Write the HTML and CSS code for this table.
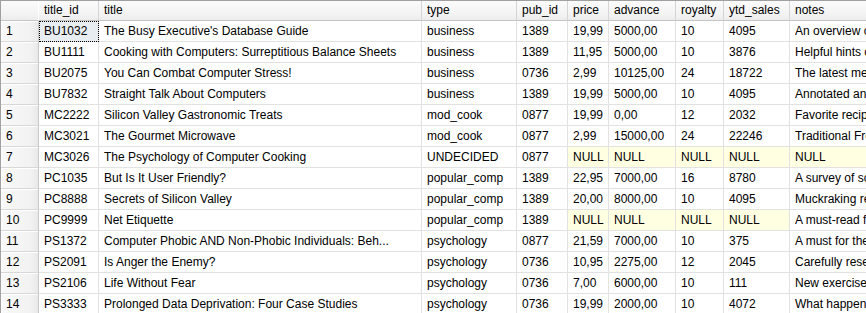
FILE: index.html
```html
<!DOCTYPE html>
<html>
<head>
  <link rel="stylesheet" href="styles.css">
</head>
<body>
  <div class="results">
    <div class="grid">
      <div class="hd corner"></div>
      <div class="hd">title_id</div>
      <div class="hd">title</div>
      <div class="hd">type</div>
      <div class="hd">pub_id</div>
      <div class="hd">price</div>
      <div class="hd">advance</div>
      <div class="hd">royalty</div>
      <div class="hd">ytd_sales</div>
      <div class="hd">notes</div>

      <div class="rn">1</div>
      <div class="cell selected">BU1032</div>
      <div class="cell">The Busy Executive's Database Guide</div>
      <div class="cell">business</div>
      <div class="cell">1389</div>
      <div class="cell">19,99</div>
      <div class="cell">5000,00</div>
      <div class="cell">10</div>
      <div class="cell">4095</div>
      <div class="cell">An overview of available database systems with emphasis on common business applications. Illustrated.</div>

      <div class="rn">2</div>
      <div class="cell">BU1111</div>
      <div class="cell">Cooking with Computers: Surreptitious Balance Sheets</div>
      <div class="cell">business</div>
      <div class="cell">1389</div>
      <div class="cell">11,95</div>
      <div class="cell">5000,00</div>
      <div class="cell">10</div>
      <div class="cell">3876</div>
      <div class="cell">Helpful hints on how to use your electronic resources to the best advantage.</div>

      <div class="rn">3</div>
      <div class="cell">BU2075</div>
      <div class="cell">You Can Combat Computer Stress!</div>
      <div class="cell">business</div>
      <div class="cell">0736</div>
      <div class="cell">2,99</div>
      <div class="cell">10125,00</div>
      <div class="cell">24</div>
      <div class="cell">18722</div>
      <div class="cell">The latest medical and psychological techniques for living with the electronic office.</div>

      <div class="rn">4</div>
      <div class="cell">BU7832</div>
      <div class="cell">Straight Talk About Computers</div>
      <div class="cell">business</div>
      <div class="cell">1389</div>
      <div class="cell">19,99</div>
      <div class="cell">5000,00</div>
      <div class="cell">10</div>
      <div class="cell">4095</div>
      <div class="cell">Annotated analysis of what computers can do for you: a no-hype guide for the critical user.</div>

      <div class="rn">5</div>
      <div class="cell">MC2222</div>
      <div class="cell">Silicon Valley Gastronomic Treats</div>
      <div class="cell">mod_cook</div>
      <div class="cell">0877</div>
      <div class="cell">19,99</div>
      <div class="cell">0,00</div>
      <div class="cell">12</div>
      <div class="cell">2032</div>
      <div class="cell">Favorite recipes for quick, easy, and elegant meals.</div>

      <div class="rn">6</div>
      <div class="cell">MC3021</div>
      <div class="cell">The Gourmet Microwave</div>
      <div class="cell">mod_cook</div>
      <div class="cell">0877</div>
      <div class="cell">2,99</div>
      <div class="cell">15000,00</div>
      <div class="cell">24</div>
      <div class="cell">22246</div>
      <div class="cell">Traditional French gourmet recipes adapted for modern microwave cooking.</div>

      <div class="rn">7</div>
      <div class="cell">MC3026</div>
      <div class="cell">The Psychology of Computer Cooking</div>
      <div class="cell">UNDECIDED</div>
      <div class="cell">0877</div>
      <div class="cell null">NULL</div>
      <div class="cell null">NULL</div>
      <div class="cell null">NULL</div>
      <div class="cell null">NULL</div>
      <div class="cell null">NULL</div>

      <div class="rn">8</div>
      <div class="cell">PC1035</div>
      <div class="cell">But Is It User Friendly?</div>
      <div class="cell">popular_comp</div>
      <div class="cell">1389</div>
      <div class="cell">22,95</div>
      <div class="cell">7000,00</div>
      <div class="cell">16</div>
      <div class="cell">8780</div>
      <div class="cell">A survey of software for the naive user, focusing on the 'friendliness' of each.</div>

      <div class="rn">9</div>
      <div class="cell">PC8888</div>
      <div class="cell">Secrets of Silicon Valley</div>
      <div class="cell">popular_comp</div>
      <div class="cell">1389</div>
      <div class="cell">20,00</div>
      <div class="cell">8000,00</div>
      <div class="cell">10</div>
      <div class="cell">4095</div>
      <div class="cell">Muckraking reporting on the world's largest computer hardware and software manufacturers.</div>

      <div class="rn">10</div>
      <div class="cell">PC9999</div>
      <div class="cell">Net Etiquette</div>
      <div class="cell">popular_comp</div>
      <div class="cell">1389</div>
      <div class="cell null">NULL</div>
      <div class="cell null">NULL</div>
      <div class="cell null">NULL</div>
      <div class="cell null">NULL</div>
      <div class="cell">A must-read for computer conferencing.</div>

      <div class="rn">11</div>
      <div class="cell">PS1372</div>
      <div class="cell">Computer Phobic AND Non-Phobic Individuals: Beh...</div>
      <div class="cell">psychology</div>
      <div class="cell">0877</div>
      <div class="cell">21,59</div>
      <div class="cell">7000,00</div>
      <div class="cell">10</div>
      <div class="cell">375</div>
      <div class="cell">A must for the specialist, this book examines the difference between those who hate and fear computers.</div>

      <div class="rn">12</div>
      <div class="cell">PS2091</div>
      <div class="cell">Is Anger the Enemy?</div>
      <div class="cell">psychology</div>
      <div class="cell">0736</div>
      <div class="cell">10,95</div>
      <div class="cell">2275,00</div>
      <div class="cell">12</div>
      <div class="cell">2045</div>
      <div class="cell">Carefully researched study of the effects of strong emotions on the body.</div>

      <div class="rn">13</div>
      <div class="cell">PS2106</div>
      <div class="cell">Life Without Fear</div>
      <div class="cell">psychology</div>
      <div class="cell">0736</div>
      <div class="cell">7,00</div>
      <div class="cell">6000,00</div>
      <div class="cell">10</div>
      <div class="cell">111</div>
      <div class="cell">New exercise, meditation, and nutritional techniques that can reduce the shock of daily interactions.</div>

      <div class="rn">14</div>
      <div class="cell">PS3333</div>
      <div class="cell">Prolonged Data Deprivation: Four Case Studies</div>
      <div class="cell">psychology</div>
      <div class="cell">0736</div>
      <div class="cell">19,99</div>
      <div class="cell">2000,00</div>
      <div class="cell">10</div>
      <div class="cell">4072</div>
      <div class="cell">What happens when the data runs dry? Searching evaluations of information-shortage effects.</div>
    </div>
  </div>
</body>
</html>
```

FILE: styles.css
```css
* {
  margin: 0;
  padding: 0;
  box-sizing: border-box;
}

body {
  background: #fff;
  font-family: "Liberation Sans", Arial, sans-serif;
  font-size: 12px;
  color: #000;
}

.results {
  width: 866px;
  height: 313px;
  overflow: hidden;
  border-top: 1px solid #a0a0a0;
  border-left: 1px solid #a0a0a0;
}

.grid {
  display: grid;
  grid-template-columns: 38px 60px 323px 95px 51px 41px 67px 48px 66px 140px;
  grid-template-rows: 20px;
  grid-auto-rows: 21px;
  width: max-content;
}

.hd {
  padding: 0 5px;
  line-height: 19px;
  white-space: nowrap;
  overflow: hidden;
  background: linear-gradient(#fbfbfb, #f3f3f3 70%, #ececec);
  border-right: 1px solid #d5d5d5;
  border-bottom: 1px solid #c5c5c5;
}

.corner {
  border-right-color: #ffffff;
}

.rn {
  padding: 0 5px;
  line-height: 20px;
  background: linear-gradient(90deg, #f9f9f9, #f2f2f2 80%, #e9e9e9);
  border-right: 1px solid #c8c8c8;
  border-bottom: 1px solid #d8d8d8;
  box-shadow: inset 1px 1px 0 #ffffff;
}

.cell {
  padding: 0 5px;
  line-height: 20px;
  white-space: nowrap;
  overflow: hidden;
  border-right: 1px solid #e2e2e2;
  border-bottom: 1px solid #e2e2e2;
}

.cell.null {
  background: #ffffe1;
}

.cell.selected {
  background: #e8edf2;
  outline: 1px dotted #000;
  outline-offset: -1px;
}
```
